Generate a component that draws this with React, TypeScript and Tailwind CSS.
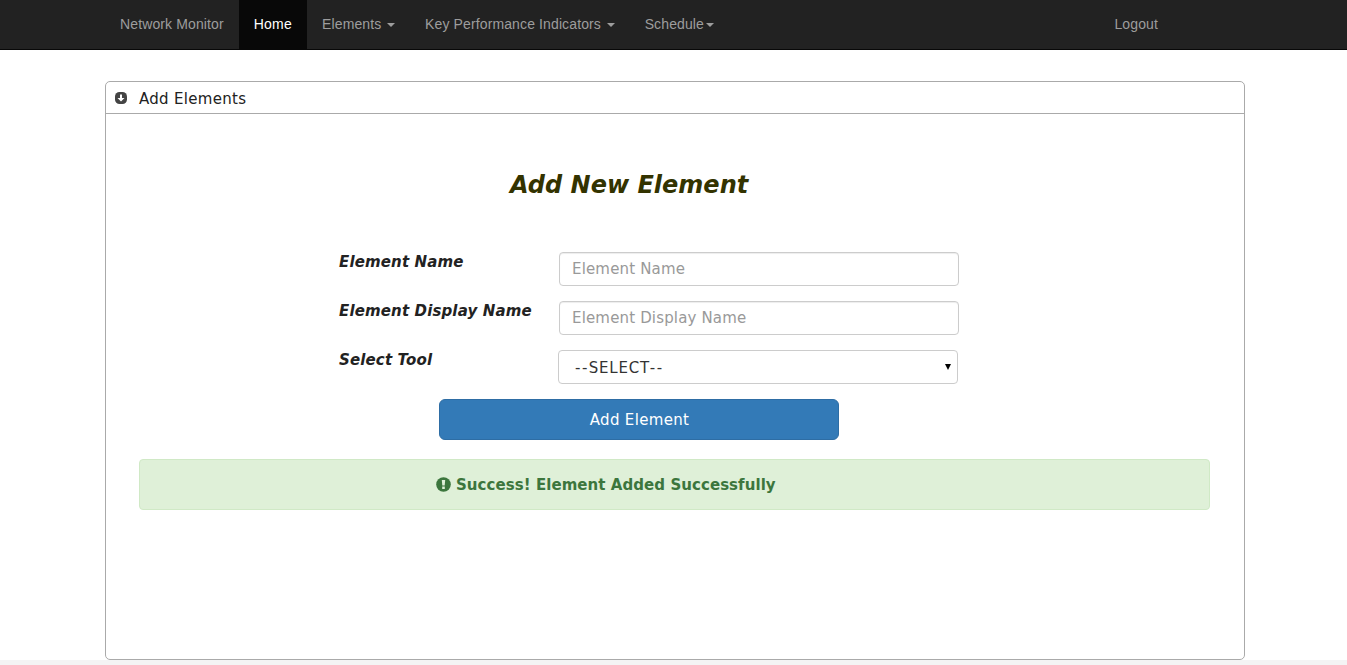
import type { ReactNode } from "react";

function Caret({ className = "" }: { className?: string }) {
  return (
    <span
      className={`inline-block h-0 w-0 border-x-4 border-t-4 border-x-transparent border-t-[#9d9d9d] align-middle ${className}`}
    />
  );
}

function NavItem({ children, active = false }: { children: ReactNode; active?: boolean }) {
  return (
    <a
      href="#"
      className={`block h-[49px] px-[15px] pt-[14px] leading-5 whitespace-nowrap ${active ? "bg-[#080808] tracking-[0.25px] text-white" : "tracking-[0.12px] text-[#9d9d9d]"}`}
    >
      {children}
    </a>
  );
}

function Field({ label, children }: { label: string; children: ReactNode }) {
  return (
    <div className="flex h-[34px] items-start">
      <label className="w-[219px] text-[15px] leading-5 font-bold tracking-[0.14px] whitespace-nowrap text-[#222] italic">
        {label}
      </label>
      {children}
    </div>
  );
}

const inputClass =
  "ml-px h-[34px] w-[400px] rounded-[4px] border border-[#ccc] bg-white px-3 pb-px text-[15px] tracking-[0.16px] text-[#555] shadow-[inset_0_1px_1px_rgba(0,0,0,0.075)] placeholder:text-[#999] placeholder:opacity-100";

export default function App() {
  return (
    <div className="flex h-[665px] flex-col overflow-hidden bg-[#f4f4f4] font-['DejaVu_Sans',sans-serif] text-[#333]">
      <nav className="h-[50px] shrink-0 border-b border-[#080808] bg-[#222] pl-[105px] font-['Liberation_Sans',sans-serif] text-sm">
        <div className="flex w-[1068px] justify-between">
          <div className="flex">
            <NavItem>Network Monitor</NavItem>
            <NavItem active>Home</NavItem>
            <NavItem>
              Elements <Caret className="ml-[1.7px]" />
            </NavItem>
            <NavItem>
              Key Performance Indicators <Caret className="ml-[1.7px]" />
            </NavItem>
            <NavItem>
              Schedule
              <Caret className="ml-0.5" />
            </NavItem>
          </div>
          <NavItem>Logout</NavItem>
        </div>
      </nav>

      <main className="h-[610px] shrink-0 bg-white pt-[31px] pl-[105px]">
        <section className="h-[579px] w-[1140px] rounded-[5px] border border-[#aaa]">
          <header className="flex h-8 items-center border-b border-[#aaa] pl-[9px] text-[15px] tracking-[0.3px] text-[#222]">
            <svg width="12" height="12" viewBox="0 0 12 12" className="mr-3">
              <rect width="12" height="12" rx="4.5" fill="#444" />
              <path d="M5 2.5h2V6h2.5L6 9.5 2.5 6H5z" fill="#fff" />
            </svg>
            <span className="pt-[3px]">Add Elements</span>
          </header>

          <div className="pl-[33px]">
            <h1 className="pt-[55px] pl-[371px] text-2xl leading-8 font-bold text-[#330] italic">
              Add New Element
            </h1>
            <form className="mt-[51px] flex flex-col gap-[15px] pl-[200px]">
              <Field label="Element Name">
                <input className={inputClass} placeholder="Element Name" />
              </Field>
              <Field label="Element Display Name">
                <input className={inputClass} placeholder="Element Display Name" />
              </Field>
              <Field label="Select Tool">
                <button
                  type="button"
                  className="flex h-[34px] w-[400px] items-center justify-between rounded-[4px] border border-[#ccc] bg-white pr-1.5 pl-4 text-[15px] text-[#333]"
                >
                  <span className="pt-0.5 tracking-[1.5px]">
                    --<span className="tracking-[0.75px]">SELECT</span>--
                  </span>
                  <svg width="6" height="6" viewBox="0 0 6 6">
                    <path d="M0 0h6L3 6z" fill="#000" />
                  </svg>
                </button>
              </Field>
              <button
                type="button"
                className="ml-[100px] h-[41px] w-[400px] rounded-[6px] border border-[#2e6da4] bg-[#337ab7] pt-0.5 pl-px text-[15px] tracking-[0.33px] text-white"
              >
                Add Element
              </button>
            </form>
            <div
              role="alert"
              className="mt-[19px] flex h-[51px] w-[1071px] items-center rounded-[4px] border border-[#d0e9c6] bg-[#dff0d8] pl-[296px] text-[15px] font-bold tracking-[0.06px] text-[#3c763d]"
            >
              <svg width="15" height="15" viewBox="0 0 15 15" className="mr-[5px] mb-px">
                <circle cx="7.5" cy="7.5" r="7.3" fill="#3c763d" />
                <path d="M5.8 3h3.4l-.5 5.4H6.3zM6.2 9.6h2.6V12H6.2z" fill="#dff0d8" />
              </svg>
              <span className="pt-0.5">Success! Element Added Successfully</span>
            </div>
          </div>
        </section>
      </main>
    </div>
  );
}
